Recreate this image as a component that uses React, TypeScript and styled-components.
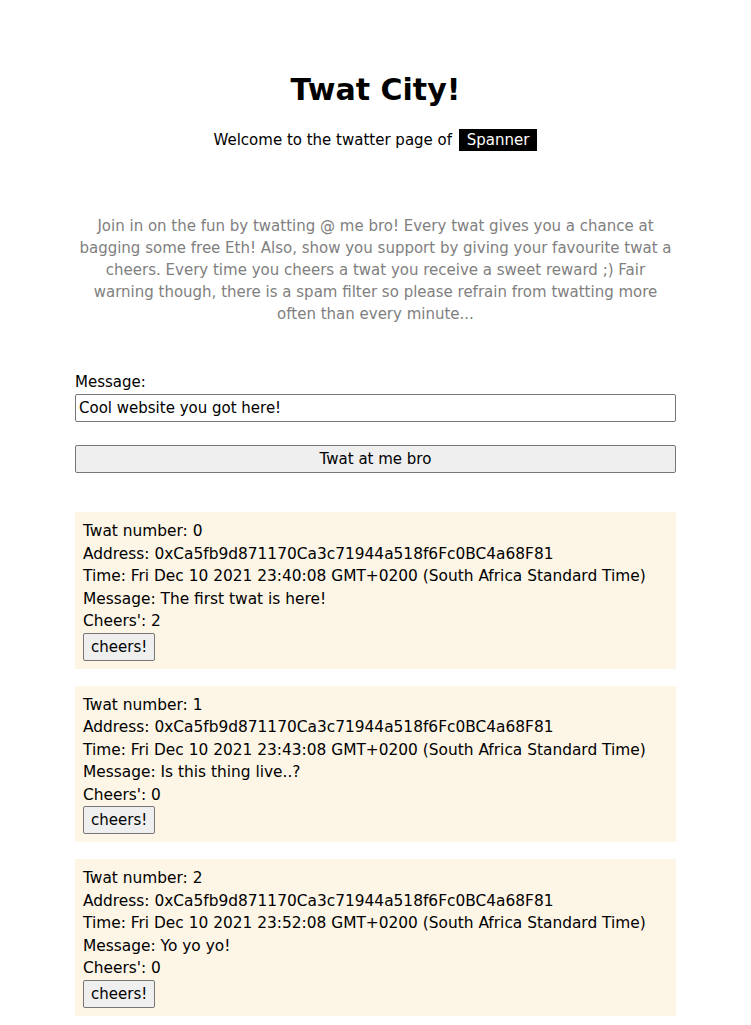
import React from 'react';
import styled, { createGlobalStyle } from 'styled-components';

const GlobalStyle = createGlobalStyle`
  body {
    margin: 0;
    background: #fff;
    font-family: "DejaVu Sans", Verdana, sans-serif;
    color: #000;
  }
`;

const twats = [
  {
    id: 0,
    address: '0xCa5fb9d871170Ca3c71944a518f6Fc0BC4a68F81',
    time: 'Fri Dec 10 2021 23:40:08 GMT+0200 (South Africa Standard Time)',
    message: 'The first twat is here!',
    cheers: 2,
  },
  {
    id: 1,
    address: '0xCa5fb9d871170Ca3c71944a518f6Fc0BC4a68F81',
    time: 'Fri Dec 10 2021 23:43:08 GMT+0200 (South Africa Standard Time)',
    message: 'Is this thing live..?',
    cheers: 0,
  },
  {
    id: 2,
    address: '0xCa5fb9d871170Ca3c71944a518f6Fc0BC4a68F81',
    time: 'Fri Dec 10 2021 23:52:08 GMT+0200 (South Africa Standard Time)',
    message: 'Yo yo yo!',
    cheers: 0,
  },
];

const App: React.FunctionComponent = () => {
  return (
    <>
      <GlobalStyle />
      <Page>
        <Title>Twat City!</Title>
        <Welcome>
          Welcome to the twatter page of <Name>Spanner</Name>
        </Welcome>
        <Blurb>
          Join in on the fun by twatting @ me bro! Every twat gives you a chance
          at bagging some free Eth! Also, show you support by giving your
          favourite twat a cheers. Every time you cheers a twat you receive a
          sweet reward ;) Fair warning though, there is a spam filter so please
          refrain from twatting more often than every minute...
        </Blurb>
        <Label htmlFor="msg">Message:</Label>
        <Input id="msg" defaultValue="Cool website you got here!" />
        <WideButton>Twat at me bro</WideButton>
        <Feed>
          {twats.map((twat) => (
            <Card key={twat.id}>
              <Line>Twat number: {twat.id}</Line>
              <Line>Address: {twat.address}</Line>
              <Line>Time: {twat.time}</Line>
              <Line>Message: {twat.message}</Line>
              <Line>Cheers': {twat.cheers}</Line>
              <SmallButton>cheers!</SmallButton>
            </Card>
          ))}
        </Feed>
      </Page>
    </>
  );
};

export default App;

const Page = styled.div`
  width: 601px;
  margin: 0 auto;
  display: flex;
  flex-direction: column;
  padding-bottom: 40px;
`;

const Title = styled.h1`
  margin: 70px 0 0;
  font-size: 30px;
  line-height: 40px;
  font-weight: bold;
  text-align: center;
`;

const Welcome = styled.div`
  margin-top: 19px;
  font-size: 15px;
  line-height: 22px;
  text-align: center;
`;

const Name = styled.span`
  display: inline-block;
  background: #000;
  color: #fff;
  padding: 0 8px;
  margin-left: 2px;
`;

const Blurb = styled.p`
  margin: 64px 0 0;
  color: #808080;
  font-size: 15px;
  line-height: 22px;
  text-align: center;
`;

const Label = styled.label`
  margin-top: 47px;
  font-size: 15px;
  line-height: 20px;
`;

const Input = styled.input`
  margin-top: 2px;
  box-sizing: border-box;
  width: 100%;
  height: 28px;
  padding: 0 3px;
  border: 1px solid #767676;
  border-radius: 2px;
  font-family: inherit;
  font-size: 15px;
  color: #000;
`;

const WideButton = styled.button`
  margin-top: 23px;
  box-sizing: border-box;
  width: 100%;
  height: 28px;
  border: 1px solid #767676;
  border-radius: 2px;
  background: #efefef;
  font-family: inherit;
  font-size: 15px;
  color: #000;
`;

const Feed = styled.div`
  margin-top: 39px;
  display: flex;
  flex-direction: column;
  gap: 17px;
`;

const Card = styled.div`
  background: #fdf5e6;
  padding: 8px;
  display: flex;
  flex-direction: column;
  align-items: flex-start;
`;

const Line = styled.div`
  font-size: 15.4px;
  line-height: 22.5px;
`;

const SmallButton = styled.button`
  box-sizing: border-box;
  height: 28px;
  padding: 0 7px;
  border: 1px solid #767676;
  border-radius: 2px;
  background: #efefef;
  font-family: inherit;
  font-size: 15px;
  color: #000;
`;
